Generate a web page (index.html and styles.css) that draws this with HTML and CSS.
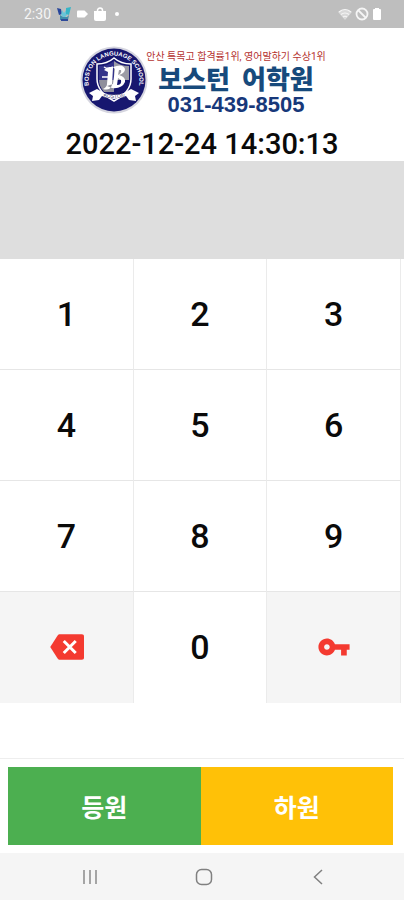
FILE: index.html
```html
<!DOCTYPE html>
<html lang="ko">

<head>
    <meta charset="UTF-8">
    <meta name="viewport" content="width=device-width, initial-scale=1.0">
    <title>보스턴 어학원</title>
    <link rel="stylesheet" href="styles.css">
</head>

<body>
    <div class="status-bar">
        <span class="status-time">2:30</span>
        <svg width="14" height="14" viewBox="0 0 14 14">
            <path d="M0 1l4 1 1 5-3 1z" fill="#27459b"/>
            <path d="M5 3l2 3 2-3 1 5-3 3-3-3z" fill="#68c5d8"/>
            <path d="M9 1l5-1-2 8-3-1z" fill="#37b5c6"/>
            <path d="M3 8l3 2h4l2-2-1 5H3z" fill="#3e8dab"/>
            <path d="M4 12h7v2H4z" fill="#2e4a9a"/>
        </svg>
        <svg width="11" height="14" viewBox="0 0 11 14">
            <path d="M1 3.500h6.500l3.500 3.500-3.500 3.500H1q-1 0-1-1v-5q0-1 1-1z" fill="#fff"/>
        </svg>
        <svg width="12" height="14" viewBox="0 0 12 14">
            <path d="M3.500 5V3.500a2.500 2.500 0 0 1 5 0V5" fill="none" stroke="#fff" stroke-width="1.500"/>
            <path d="M0 4h12v8q0 2-2 2H2q-2 0-2-2z" fill="#fff"/>
        </svg>
        <span class="status-dot"></span>
        <div class="status-right">
            <svg width="14" height="14" viewBox="0 0 14 14">
                <path d="M0 5q7-6 14 0L7 13z" fill="#d9d9d9"/>
                <path d="M1 5q6-5 12 0M3 7.500q4-3 8 0M5 10q2-1.500 4 0" fill="none" stroke="#f5f5f5" stroke-width="1.200"/>
            </svg>
            <svg width="14" height="14" viewBox="0 0 14 14">
                <circle cx="7" cy="7" r="5.500" fill="none" stroke="#f5f5f5" stroke-width="1.800"/>
                <path d="M3 3l8 8" stroke="#f5f5f5" stroke-width="1.800"/>
            </svg>
            <svg width="10" height="14" viewBox="0 0 10 14">
                <path d="M3 1h4v1h1q1 0 1 1v9q0 1-1 1H2q-1 0-1-1V3q0-1 1-1h1z" fill="#fff"/>
            </svg>
        </div>
    </div>

    <header class="header">
        <div class="brand">
            <svg class="seal" width="68" height="70" viewBox="0 0 68 70">
                <defs>
                    <path id="sealArc" d="M11 47a25.500 25.500 0 1 1 46 0"/>
                </defs>
                <circle cx="34" cy="35" r="33.500" fill="#d5d5df"/>
                <circle cx="34" cy="35" r="31.500" fill="#17176f"/>
                <path d="M34 13q7 6 17 6v15q0 13-17 22-17-9-17-22V19q10 0 17-6z" fill="#17176f" stroke="#fff" stroke-width="1.500"/>
                <path d="M34 16v19H19V21q9 0 15-5z" fill="#33338a"/>
                <path d="M34 16q6 5 15 5v14H34z" fill="#9c9ca6"/>
                <path d="M19 35h15v12H24q-5-6-5-12z" fill="#8f8f9c"/>
                <!-- blackletter monogram -->
                <path d="M24 25q5-5 9-2l-1 17q-2 6-9 4 4-2 4-5l1-12zM33 22q10-4 12 2 0 4-6 6 7 2 6 7-3 7-13 6l-5-2 6-2 2-15zM39 25l-1 5q4-2 3-5zM38 33l-1 7q5 0 4-5z" fill="#fff" fill-rule="evenodd"/>
                <path d="M22 32h9M24 22q4 3 9 0" fill="none" stroke="#fff" stroke-width="1.500"/>
                <path d="M9 48l8-4 7 4q10 4 20 0l7-4 8 4-4 3 1 5-7-1-3-4q-12 6-24 0l-3 4-7 1 1-5z" fill="#fff"/>
                <text class="seal-ring"><textPath href="#sealArc" startOffset="50%" text-anchor="middle">BOSTON LANGUAGE SCHOOL</textPath></text>
                <text class="seal-ribbon" x="34" y="53" text-anchor="middle">BOSTON</text>
            </svg>
            <div class="brand-text">
                <p class="slogan">안산 특목고 합격률1위, 영어말하기 수상1위</p>
                <h1 class="brand-name"><span>보스턴</span> <span>어학원</span></h1>
                <p class="phone">031-439-8505</p>
            </div>
        </div>
        <time class="clock" datetime="2022-12-24T14:30:13">2022-12-24 14:30:13</time>
    </header>

    <main class="main">
        <output class="display" aria-label="입력 번호"></output>

        <div class="keypad">
            <button type="button" class="key">1</button>
            <button type="button" class="key">2</button>
            <button type="button" class="key">3</button>
            <button type="button" class="key">4</button>
            <button type="button" class="key">5</button>
            <button type="button" class="key">6</button>
            <button type="button" class="key">7</button>
            <button type="button" class="key">8</button>
            <button type="button" class="key">9</button>
            <button type="button" class="key key-action" aria-label="지우기">
                <svg width="36" height="36" viewBox="0 0 24 24">
                    <path d="M22.500 3.500H8c-.690 0-1.230.350-1.590.880L1.500 12l4.910 7.610c.360.530.900.890 1.590.890h14.500c1 0 1.500-.500 1.500-1.500V5c0-1-.500-1.500-1.500-1.500z" fill="#f43a30"/>
                    <path d="M10.500 8l8 8M18.500 8l-8 8" stroke="#fff" stroke-width="2"/>
                </svg>
            </button>
            <button type="button" class="key">0</button>
            <button type="button" class="key key-action" aria-label="비밀번호">
                <svg width="34" height="34" viewBox="0 0 24 24">
                    <path d="M12.650 10C11.830 7.670 9.610 6 7 6c-3.310 0-6 2.690-6 6s2.690 6 6 6c2.610 0 4.830-1.670 5.650-4H17v4h4v-4h2v-4H12.650zM7 14c-1.100 0-2-.900-2-2s.900-2 2-2 2 .900 2 2-.900 2-2 2z" fill="#f43a30"/>
                </svg>
            </button>
        </div>
    </main>

    <footer class="actions">
        <button type="button" class="action check-in">등원</button>
        <button type="button" class="action check-out">하원</button>
    </footer>

    <nav class="nav-bar">
        <button type="button" class="nav-button" aria-label="최근 앱">
            <svg width="20" height="20" viewBox="0 0 20 20">
                <path d="M4 3v14M10 3v14M16 3v14" stroke="#8a8a8a" stroke-width="1.500"/>
            </svg>
        </button>
        <button type="button" class="nav-button" aria-label="홈">
            <svg width="20" height="20" viewBox="0 0 20 20">
                <rect x="2.500" y="2.500" width="15" height="15" rx="5" fill="none" stroke="#808080" stroke-width="1.500"/>
            </svg>
        </button>
        <button type="button" class="nav-button" aria-label="뒤로">
            <svg width="20" height="20" viewBox="0 0 20 20">
                <path d="M14 3l-7.500 7 7.500 7" fill="none" stroke="#808080" stroke-width="1.500"/>
            </svg>
        </button>
    </nav>
</body>

</html>
```
FILE: styles.css
```css
* {
    box-sizing: border-box;
}

body {
    margin: 0;
    min-height: 100vh;
    display: flex;
    flex-direction: column;
    background-color: #fff;
    color: #0a0a0a;
    font-family: Roboto, "Noto Sans CJK KR", sans-serif;
}

button {
    margin: 0;
    padding: 0;
    border: none;
    background: none;
    font-family: inherit;
    cursor: pointer;
}

h1,
p {
    margin: 0;
}

svg {
    display: block;
}

/* Status bar */
.status-bar {
    display: flex;
    align-items: center;
    gap: 6px;
    height: 28px;
    padding: 0 22px 0 24px;
    background-color: #bebebe;
    color: #f5f5f5;
}

.status-time {
    font-size: 14px;
}

.status-dot {
    width: 4px;
    height: 4px;
    margin-left: 3px;
    border-radius: 50%;
    background-color: #fff;
}

.status-right {
    display: flex;
    gap: 3px;
    margin-left: auto;
}

/* Header */
.header {
    display: flex;
    flex-direction: column;
    align-items: center;
    padding-top: 17px;
}

.brand {
    display: flex;
    align-items: center;
    padding-left: 2px;
}

.seal {
    margin-right: -2px;
}

.seal-ring {
    font: bold 6px "Liberation Sans", sans-serif;
    fill: #fff;
}

.seal-ribbon {
    font: 5px "Liberation Sans", sans-serif;
    fill: #55557f;
}

.brand-text {
    display: flex;
    flex-direction: column;
    align-items: center;
    padding-top: 3px;
}

.slogan {
    font-size: 10px;
    line-height: 14px;
    color: #b5322f;
}

.brand-name {
    display: flex;
    gap: 12px;
    font-size: 26px;
    font-weight: 900;
    line-height: 32px;
    color: #174a7c;
}

.phone {
    font-family: "Liberation Sans", sans-serif;
    font-size: 22px;
    font-weight: bold;
    line-height: 18px;
    color: #17387a;
}

.clock {
    padding: 12px 0 0;
    font-size: 29px;
    font-weight: 500;
    line-height: 34px;
}

/* Keypad */
.main {
    flex: 1;
    display: flex;
    flex-direction: column;
}

.display {
    height: 98px;
    background-color: #dedede;
}

.keypad {
    display: grid;
    grid-template-columns: repeat(3, 1fr);
    grid-auto-rows: 111px;
    margin-right: 3px;
}

.key {
    display: flex;
    align-items: center;
    justify-content: center;
    border-right: 1px solid #ebebeb;
    border-bottom: 1px solid #e6e6e6;
    color: #0a0a0a;
    font-size: 34px;
    font-weight: 500;
}

.key:nth-child(n + 10) {
    padding-bottom: 2px;
    border-bottom: none;
}

.key-action {
    background-color: #f5f5f5;
}

/* Check in / check out */
.actions {
    display: flex;
    padding: 8px 11px 8px 8px;
    border-top: 1px solid #eee;
}

.action {
    flex: 1;
    height: 78px;
    color: #fff;
    font-size: 25px;
    font-weight: 700;
}

.check-in {
    background-color: #4caf50;
}

.check-out {
    background-color: #ffc107;
}

/* Navigation bar */
.nav-bar {
    display: flex;
    justify-content: space-between;
    align-items: center;
    height: 47px;
    padding: 0 76px 0 80px;
    background-color: #f5f5f5;
}
```
